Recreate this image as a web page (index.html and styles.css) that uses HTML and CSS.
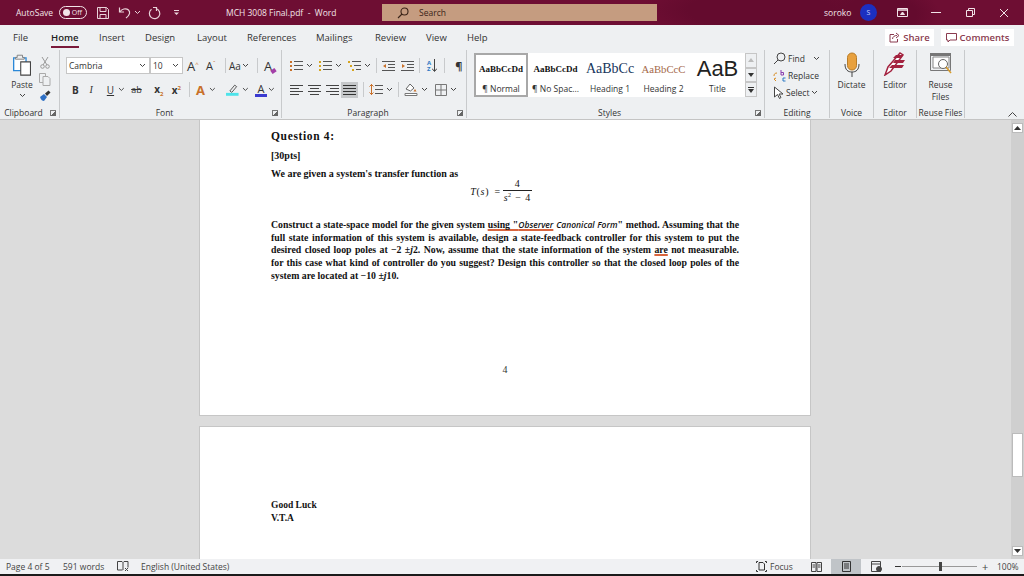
FILE: index.html
```html
<!DOCTYPE html>
<html lang="en">

<head>
    <meta charset="UTF-8">
    <title>MCH 3008 Final.pdf - Word</title>
    <link rel="stylesheet" href="styles.css">
</head>

<body>
    <div class="app">
        <!-- title bar -->
        <header class="titlebar">
            <span class="autosave">AutoSave</span>
            <span class="toggle"><i class="knob"></i>Off</span>
            <svg class="qat-save" width="14" height="14" viewBox="0 0 14 14" fill="none" stroke="#e9d3da"><path d="M1.5 1.5h9l2 2v9h-11z"/><path d="M4 1.5v4h6v-4M4 12.500v-4h6v4"/></svg>
            <svg class="qat-undo" width="13" height="13" viewBox="0 0 13 13" fill="none" stroke="#e9d3da" stroke-width="1.2"><path d="M1.5 1.5V6H6"/><path d="M1.800 6C3.500 2.800 8 1.800 10.500 4c2 2 1.500 5-2.500 8"/></svg>
            <svg class="qat-chev" width="7" height="5" viewBox="0 0 7 5" fill="none" stroke="#e9d3da"><path d="M1 1l2.500 2.500L6 1"/></svg>
            <svg class="qat-redo" width="14" height="14" viewBox="0 0 14 14" fill="none" stroke="#e9d3da" stroke-width="1.2"><path d="M5 1.5h3.500V5"/><path d="M8 2.500a5.200 5.200 0 1 1-4.500 .8"/></svg>
            <svg class="qat-more" width="7" height="7" viewBox="0 0 7 7" fill="#e9d3da"><path d="M1 1h5v1H1zM1 3.500h5L3.500 6z"/></svg>
            <span class="doc-title">MCH 3008 Final.pdf&nbsp; -&nbsp; Word</span>
            <div class="searchbox">
                <svg width="12" height="12" viewBox="0 0 12 12" fill="none" stroke="#3a2418" stroke-width="1.1"><circle cx="7.500" cy="4.500" r="3.500"/><path d="M5 7l-4 4"/></svg>
                <span>Search</span>
            </div>
            <span class="user">soroko</span>
            <span class="avatar">S</span>
            <svg class="win-ribbon" width="11" height="9" viewBox="0 0 11 9" fill="none" stroke="#f2e4e8"><path d="M.5 .5h10v8H.5z"/><path d="M.5 2h10" stroke-width="1.5"/><path d="M3.500 6.500L5.500 4l2 2.500z" fill="#f2e4e8"/></svg>
            <svg class="win-min" width="10" height="1" viewBox="0 0 10 1"><path d="M0 0h10v1H0z" fill="#f2e4e8"/></svg>
            <svg class="win-max" width="9" height="9" viewBox="0 0 9 9" fill="none" stroke="#f2e4e8"><path d="M.5 2.500h6v6h-6zM2.500 2.500v-2h6v6h-2"/></svg>
            <svg class="win-close" width="10" height="10" viewBox="0 0 10 10" stroke="#f2e4e8"><path d="M1 1l8 8M9 1l-8 8"/></svg>
        </header>

        <!-- tabs -->
        <nav class="tabs">
            <span class="tab t-file">File</span>
            <span class="tab t-home active">Home</span>
            <span class="tab t-insert">Insert</span>
            <span class="tab t-design">Design</span>
            <span class="tab t-layout">Layout</span>
            <span class="tab t-refs">References</span>
            <span class="tab t-mail">Mailings</span>
            <span class="tab t-review">Review</span>
            <span class="tab t-view">View</span>
            <span class="tab t-help">Help</span>
            <span class="tab-btn share">
                <svg width="11" height="11" viewBox="0 0 11 11" fill="none" stroke="#8a3b4f"><path d="M5 2.500H1V10h7.500V7"/><path d="M3.500 7c.3-2.500 2-3.500 4.500-3.500M7 1l3 2.500L7 6"/></svg>
                Share
            </span>
            <span class="tab-btn comments">
                <svg width="11" height="10" viewBox="0 0 11 10" fill="none" stroke="#8a3b4f"><path d="M.5 .5h10V7H4L2 9V7H.5z"/></svg>
                Comments
            </span>
        </nav>

        <!-- ribbon -->
        <section class="ribbon">
            <div class="group g-clip">
                <div class="group-body clip-body">
                    <div class="paste">
                        <svg width="23" height="23" viewBox="0 0 24 26" fill="none"><path d="M2 5.500h14V20H2z" stroke="#2b88d8" stroke-width="1.5" fill="#fff"/><path d="M6 5V2.500h6V5h2v2H4V5z" stroke="#777" fill="#eee"/><path d="M10 10h11v15H10z" fill="#fff" stroke="#444" stroke-width="1.2"/></svg>
                        <span>Paste</span>
                        <svg class="chev" width="7" height="5" viewBox="0 0 7 5"><path d="M1 1l2.500 2.500L6 1" fill="none" stroke="#444"/></svg>
                    </div>
                    <div class="clip-tools">
                        <svg width="10" height="13" viewBox="0 0 10 13" fill="none" stroke="#999"><path d="M2 1l5 8M8 1L3 9"/><circle cx="2.500" cy="10.500" r="1.800"/><circle cx="7.500" cy="10.500" r="1.800"/></svg>
                        <svg width="12" height="13" viewBox="0 0 12 13" fill="none" stroke="#aaa"><path d="M.5 .5h6v9h-6z"/><path d="M4 3.500h5l2 2v7H4z" fill="#eef0f2"/></svg>
                        <svg width="12" height="12" viewBox="0 0 12 12"><path d="M1 7l4-3 3 3-3 4C3.500 11 2 10 1 7z" fill="#2e6fc4"/><path d="M6 3.500L9.500 .5l2 2L8 6z" fill="#333"/></svg>
                    </div>
                </div>
                <div class="group-label has-launcher">Clipboard<i class="launcher"></i></div>
            </div>

            <div class="group g-font">
                <div class="group-body tool-rows">
                    <div class="tool-row font-row1">
                        <span class="combo c-face">Cambria<svg width="7" height="5" viewBox="0 0 7 5"><path d="M1 1l2.500 2.500L6 1" fill="none" stroke="#444"/></svg></span>
                        <span class="combo c-size">10<svg width="7" height="5" viewBox="0 0 7 5"><path d="M1 1l2.500 2.500L6 1" fill="none" stroke="#444"/></svg></span>
                        <span class="glyph a-big">A<sup>^</sup></span>
                        <span class="glyph a-small">A<sup>ˇ</sup></span>
                        <i class="sep"></i>
                        <span class="glyph aa">Aa<svg width="7" height="5" viewBox="0 0 7 5"><path d="M1 1l2.500 2.500L6 1" fill="none" stroke="#444"/></svg></span>
                        <i class="sep"></i>
                        <span class="glyph clear">A<i class="eraser"></i></span>
                    </div>
                    <div class="tool-row font-row2">
                        <b class="glyph w-b">B</b>
                        <i class="glyph w-i">I</i>
                        <u class="glyph w-u">U</u>
                        <svg class="chev" width="7" height="5" viewBox="0 0 7 5"><path d="M1 1l2.500 2.500L6 1" fill="none" stroke="#444"/></svg>
                        <s class="glyph w-s">ab</s>
                        <b class="glyph w-x">x<sub>2</sub></b>
                        <b class="glyph w-x2">x<sup>2</sup></b>
                        <i class="sep"></i>
                        <b class="glyph fx">A</b>
                        <svg class="chev" width="7" height="5" viewBox="0 0 7 5"><path d="M1 1l2.500 2.500L6 1" fill="none" stroke="#444"/></svg>
                        <svg class="hl" width="13" height="13" viewBox="0 0 13 13"><path d="M4 8l5-6 2 1.500-5 6z" fill="none" stroke="#555"/><path d="M0 10h13v3H0z" fill="#4ee3ea"/></svg>
                        <svg class="chev" width="7" height="5" viewBox="0 0 7 5"><path d="M1 1l2.500 2.500L6 1" fill="none" stroke="#444"/></svg>
                        <span class="glyph color">A</span>
                        <svg class="chev" width="7" height="5" viewBox="0 0 7 5"><path d="M1 1l2.500 2.500L6 1" fill="none" stroke="#444"/></svg>
                    </div>
                </div>
                <div class="group-label has-launcher">Font<i class="launcher"></i></div>
            </div>

            <div class="group g-para">
                <div class="group-body tool-rows">
                    <div class="tool-row para-row1">
                        <svg width="13" height="11" viewBox="0 0 13 11"><path d="M0 1h2v2H0zM0 5h2v2H0zM0 9h2v2H0z" fill="#c8702a"/><path d="M4 1.500h9M4 5.500h9M4 9.500h9" stroke="#555"/></svg>
                        <svg class="chev" width="7" height="5" viewBox="0 0 7 5"><path d="M1 1l2.500 2.500L6 1" fill="none" stroke="#444"/></svg>
                        <svg class="m-num" width="13" height="11" viewBox="0 0 13 11"><path d="M0 1h2v2H0zM0 5h2v2H0zM0 9h2v2H0z" fill="#d6a520"/><path d="M4 1.500h9M4 5.500h9M4 9.500h9" stroke="#555"/></svg>
                        <svg class="chev" width="7" height="5" viewBox="0 0 7 5"><path d="M1 1l2.500 2.500L6 1" fill="none" stroke="#444"/></svg>
                        <svg class="m-multi" width="13" height="11" viewBox="0 0 13 11"><path d="M0 1h2v2H0zM2 5h2v2H2zM4 9h2v2H4z" fill="#d6a520"/><path d="M4 1.500h9M6 5.500h7M8 9.500h5" stroke="#555"/></svg>
                        <svg class="chev" width="7" height="5" viewBox="0 0 7 5"><path d="M1 1l2.500 2.500L6 1" fill="none" stroke="#444"/></svg>
                        <i class="sep"></i>
                        <svg width="13" height="10" viewBox="0 0 13 10"><path d="M0 .5h13M6 3.500h7M6 6.500h7M0 9.500h13" stroke="#555"/><path d="M4 3v4L1 5z" fill="#c8702a"/></svg>
                        <svg class="m-ind" width="13" height="10" viewBox="0 0 13 10"><path d="M0 .5h13M6 3.500h7M6 6.500h7M0 9.500h13" stroke="#555"/><path d="M1 3v4l3-2z" fill="#c8702a"/></svg>
                        <i class="sep"></i>
                        <span class="sort"><b>A<br>Z</b><svg width="5" height="13" viewBox="0 0 5 13"><path d="M2.500 0v12M0 9.500l2.500 3 2.500-3" fill="none" stroke="#444"/></svg></span>
                        <i class="sep"></i>
                        <b class="pilcrow">¶</b>
                    </div>
                    <div class="tool-row para-row2">
                        <svg width="13" height="10" viewBox="0 0 13 10"><path d="M0 .5h13M0 3.500h9M0 6.500h13M0 9.500h9" stroke="#444"/></svg>
                        <svg class="m-al" width="13" height="10" viewBox="0 0 13 10"><path d="M0 .5h13M2 3.500h9M0 6.500h13M2 9.500h9" stroke="#444"/></svg>
                        <svg class="m-al" width="13" height="10" viewBox="0 0 13 10"><path d="M0 .5h13M4 3.500h9M0 6.500h13M4 9.500h9" stroke="#444"/></svg>
                        <span class="justify"><svg width="13" height="10" viewBox="0 0 13 10"><path d="M0 .5h13M0 3.500h13M0 6.500h13M0 9.500h13" stroke="#333"/></svg></span>
                        <i class="sep"></i>
                        <svg width="14" height="11" viewBox="0 0 14 11"><path d="M2.500 0v11M.5 2.500l2-2 2 2M.5 8.500l2 2 2-2" fill="none" stroke="#c8702a"/><path d="M6 1.500h8M6 5.500h8M6 9.500h8" stroke="#555"/></svg>
                        <svg class="chev" width="7" height="5" viewBox="0 0 7 5"><path d="M1 1l2.500 2.500L6 1" fill="none" stroke="#444"/></svg>
                        <i class="sep"></i>
                        <svg width="14" height="13" viewBox="0 0 14 13"><path d="M2 6l4-5 4 4-3.500 3z" fill="#fff" stroke="#666"/><path d="M11 6l1.500 2.500h-3z" fill="#c8702a"/><path d="M1 10.500h12v2H1z" fill="#fff" stroke="#777"/></svg>
                        <svg class="chev" width="7" height="5" viewBox="0 0 7 5"><path d="M1 1l2.500 2.500L6 1" fill="none" stroke="#444"/></svg>
                        <svg class="m-bd" width="12" height="12" viewBox="0 0 12 12" fill="none" stroke="#777"><path d="M.5 .5h11v11H.5zM6 .5v11M.5 6h11"/></svg>
                        <svg class="chev" width="7" height="5" viewBox="0 0 7 5"><path d="M1 1l2.500 2.500L6 1" fill="none" stroke="#444"/></svg>
                    </div>
                </div>
                <div class="group-label has-launcher">Paragraph<i class="launcher"></i></div>
            </div>

            <div class="group g-styles">
                <div class="group-body styles-body">
                    <div class="gallery">
                        <div class="style-item s-normal selected"><span class="preview p-serif">AaBbCcDd</span><span class="style-name">¶ Normal</span></div>
                        <div class="style-item s-nospace"><span class="preview p-serif">AaBbCcDd</span><span class="style-name">¶ No Spac...</span></div>
                        <div class="style-item s-h1"><span class="preview p-h1">AaBbCc</span><span class="style-name">Heading 1</span></div>
                        <div class="style-item s-h2"><span class="preview p-h2">AaBbCcC</span><span class="style-name">Heading 2</span></div>
                        <div class="style-item s-title"><span class="preview p-title">AaB</span><span class="style-name">Title</span></div>
                        <div class="gallery-scroll">
                            <span><svg width="6" height="4" viewBox="0 0 6 4"><path d="M0 4l3-4 3 4z" fill="#bbb"/></svg></span>
                            <span><svg width="6" height="4" viewBox="0 0 6 4"><path d="M0 0l3 4 3-4z" fill="#333"/></svg></span>
                            <span><svg width="6" height="6" viewBox="0 0 6 6"><path d="M0 0h6v1H0zM0 2l3 4 3-4z" fill="#333"/></svg></span>
                        </div>
                    </div>
                </div>
                <div class="group-label has-launcher">Styles<i class="launcher"></i></div>
            </div>

            <div class="group g-edit">
                <div class="group-body edit-body">
                    <div class="edit-row"><svg width="13" height="13" viewBox="0 0 13 13" fill="none" stroke="#444"><circle cx="8" cy="5" r="4"/><path d="M5 8l-4 4"/></svg>Find<svg class="chev-find" width="7" height="5" viewBox="0 0 7 5"><path d="M1 1l2.500 2.500L6 1" fill="none" stroke="#444"/></svg></div>
                    <div class="edit-row"><svg width="13" height="13" viewBox="0 0 13 13" fill="none"><path d="M1 7c0-2 1-3 3-3M3 12L1 10l2-1" stroke="#d88a1e"/><path d="M8 1v5h2.500V3.500H8" stroke="#8a3fb0"/><path d="M12.500 9H10v3h2.500" stroke="#2b78c4"/></svg>Replace</div>
                    <div class="edit-row"><svg width="11" height="13" viewBox="0 0 11 13" fill="#fff" stroke="#444"><path d="M1.500 1v10l3-2.500 2 4 1.500-1-2-3.500H10z"/></svg>Select<svg width="7" height="5" viewBox="0 0 7 5"><path d="M1 1l2.500 2.500L6 1" fill="none" stroke="#444"/></svg></div>
                </div>
                <div class="group-label">Editing</div>
            </div>

            <div class="group g-voice">
                <div class="group-body big-btn">
                    <svg width="16" height="26" viewBox="0 0 16 26" fill="none"><rect x="3.500" y="1" width="9" height="17" rx="4.500" fill="#e8a13f" stroke="#b87c28"/><path d="M1 12c0 6 3 8 7 8s7-2 7-8" stroke="#444"/><path d="M8 20v5" stroke="#444"/></svg>
                    <span>Dictate</span>
                </div>
                <div class="group-label">Voice</div>
            </div>

            <div class="group g-editor">
                <div class="group-body big-btn">
                    <svg width="24" height="24" viewBox="0 0 24 24"><path d="M2 23l3-8L17 1l3 2L8 19z" fill="#fff" stroke="#a3223f" stroke-width="1.5"/><path d="M12 8h10l-2 3H10zM9 13h12l-2 3H6z" fill="#a3223f"/><path d="M13 3h7l-2 3h-8z" fill="#a3223f"/></svg>
                    <span>Editor</span>
                </div>
                <div class="group-label">Editor</div>
            </div>

            <div class="group g-reuse">
                <div class="group-body big-btn">
                    <svg width="24" height="24" viewBox="0 0 24 24" fill="none"><path d="M1 1h21v3H1z" fill="#777"/><path d="M1.500 1.500h20v17h-20z" stroke="#777"/><path d="M4 5h16v11H4z" fill="#fff" stroke="#888"/><circle cx="14" cy="12" r="4.500" fill="#fff" stroke="#666"/><path d="M17 15l5 6" stroke="#d89a2a" stroke-width="1.5"/></svg>
                    <span>Reuse<br>Files</span>
                </div>
                <div class="group-label">Reuse Files</div>
            </div>

            <div class="collapse"><svg width="9" height="5" viewBox="0 0 9 5"><path d="M.5 4.500l4-4 4 4" fill="none" stroke="#444"/></svg></div>
        </section>

        <!-- document -->
        <main class="workspace">
            <div class="doc-area">
                <article class="page page-four">
                    <h2 class="question">Question 4:</h2>
                    <p class="points">[30pts]</p>
                    <p class="given">We are given a system's transfer function as</p>
                    <div class="formula">
                        <span class="lhs"><i>T</i>(<i>s</i>) =</span>
                        <span class="frac"><span class="num">4</span><span class="den"><i>s</i><sup>2</sup> − 4</span></span>
                    </div>
                    <p class="body-text">
                        <span class="line">Construct a state-space model for the given system <span class="squiggle">using "<em>Observer</em></span> <em>Canonical Form</em>" method. Assuming that the</span>
                        <span class="line">full state information of this system is available, design a state-feedback controller for this system to put the</span>
                        <span class="line">desired closed loop poles at −2 ±<i>j</i>2. Now, assume that the state information of the system <span class="squiggle">are</span> not measurable.</span>
                        <span class="line">for this case what kind of controller do you suggest? Design this controller so that the closed loop poles of the</span>
                        <span class="line last">system are located at −10 ±<i>j</i>10.</span>
                    </p>
                    <div class="page-number">4</div>
                </article>
                <article class="page page-five">
                    <p class="closing">Good Luck<br>V.T.A</p>
                </article>
            </div>
            <div class="scrollbar">
                <span class="sb-btn"><svg width="7" height="4" viewBox="0 0 7 4"><path d="M0 4l3.500-4L7 4z" fill="#333"/></svg></span>
                <span class="sb-thumb"></span>
                <span class="sb-btn"><svg width="7" height="4" viewBox="0 0 7 4"><path d="M0 0l3.500 4L7 0z" fill="#333"/></svg></span>
            </div>
        </main>

        <!-- status bar -->
        <footer class="statusbar">
            <span class="st-page">Page 4 of 5</span>
            <span class="st-words">591 words</span>
            <svg class="st-proof" width="12" height="11" viewBox="0 0 12 11" fill="none" stroke="#444"><path d="M.5 .5H5l1 1 1-1h4v6M6 1.500V9M.5 .5V9h5"/><path d="M8 7l3 3M11 7l-3 3"/></svg>
            <span class="st-lang">English (United States)</span>
            <svg class="st-focus" width="11" height="11" viewBox="0 0 11 11" fill="none" stroke="#333"><path d="M3 1.500h4L8.500 3v6H3z"/><path d="M.5 2V.5H2M9 .5h1.500V2M.5 9v1.500H2M9 10.500h1.500V9"/></svg>
            <span class="st-focus-label">Focus</span>
            <svg class="st-read" width="11" height="10" viewBox="0 0 11 10" fill="none" stroke="#444"><path d="M.5 .5H5v9H.5zM6 .5h4.500v9H6zM1.500 3H4M1.500 5H4M7 3h2.500M7 5h2.500"/></svg>
            <span class="st-print"><svg width="9" height="11" viewBox="0 0 9 11" fill="none" stroke="#333"><path d="M.5 .5h8v10h-8zM2 3h5M2 5h5M2 7h5"/></svg></span>
            <svg class="st-web" width="11" height="11" viewBox="0 0 11 11" fill="none" stroke="#444"><path d="M.5 .5h9v10H.5zM.5 3h9"/><circle cx="8" cy="8" r="2.500" fill="#444"/></svg>
            <span class="st-minus"></span>
            <span class="slider"><i class="slider-thumb"></i></span>
            <span class="st-plus">+</span>
            <span class="st-zoom">100%</span>
        </footer>
    </div>
</body>

</html>
```

FILE: styles.css
```css
html, body {
    margin: 0;
    padding: 0;
}

body {
    width: 1024px;
    height: 576px;
    overflow: hidden;
    font-family: "Open Sans", "Noto Sans", sans-serif;
    font-size: 8.5px;
    color: #333;
}

.app {
    display: flex;
    flex-direction: column;
    height: 576px;
}

/* title bar */
.titlebar {
    display: flex;
    align-items: center;
    flex: none;
    height: 25px;
    padding-left: 16px;
    color: #f2e4e8;
    background-color: #6e0e33;
    background-image: radial-gradient(ellipse 120px 30px at 760px 10px, #640b2e 60%, transparent 100%), radial-gradient(ellipse 60px 30px at 880px 14px, #640b2e 60%, transparent 100%);
}

.autosave { width: 43px; }

.toggle {
    display: flex;
    align-items: center;
    justify-content: space-between;
    box-sizing: border-box;
    width: 28px;
    height: 13px;
    padding: 0 4px 0 3px;
    border: 1px solid #f2e4e8;
    border-radius: 7px;
    font-size: 7px;
}

.knob {
    width: 7px;
    height: 7px;
    border-radius: 50%;
    background: #f2e4e8;
}

.qat-save { margin-left: 9px; }
.qat-undo { margin-left: 8px; }
.qat-chev { margin-left: 3px; }
.qat-redo { margin-left: 7px; }
.qat-more { margin-left: 11px; }
.doc-title { margin-left: 46px; width: 156px; }

.searchbox {
    display: flex;
    align-items: center;
    gap: 10px;
    box-sizing: border-box;
    width: 275px;
    height: 17px;
    padding-left: 15px;
    color: #3a2418;
    background: #c59c80;
}

.user { margin-left: 167px; width: 36px; }

.avatar {
    display: flex;
    align-items: center;
    justify-content: center;
    width: 17px;
    height: 17px;
    border-radius: 50%;
    font-size: 7px;
    color: #c9d0ff;
    background: #1c2fc0;
}

.win-ribbon { margin-left: 20px; }
.win-min { margin-left: 23px; }
.win-max { margin-left: 25px; }
.win-close { margin-left: 24px; }

/* tabs */
.tabs {
    display: flex;
    align-items: center;
    flex: none;
    height: 25px;
    background: #eef0f2;
    font-size: 9.5px;
}

.tab { position: relative; }
.t-file { margin-left: 13px; width: 38px; }
.t-home { width: 48px; font-weight: 600; color: #222; }
.t-insert { width: 46px; }
.t-design { width: 52px; }
.t-layout { width: 50px; }
.t-refs { width: 69px; }
.t-mail { width: 59px; }
.t-review { width: 51px; }
.t-view { width: 41px; }
.t-help { width: 418px; }

.t-home::after {
    content: "";
    position: absolute;
    left: 0;
    right: 20px;
    bottom: -4px;
    height: 2px;
    background: #7a1a3b;
}

.tab-btn {
    display: flex;
    align-items: center;
    justify-content: center;
    gap: 3px;
    height: 17px;
    font-weight: 600;
    font-size: 9.5px;
    color: #8a3b4f;
    background: #fff;
}

.share { width: 49px; margin-right: 7px; }
.comments { width: 73px; }

/* ribbon */
.ribbon {
    display: flex;
    flex: none;
    box-sizing: border-box;
    height: 70px;
    background: #eef0f2;
    border-bottom: 1px solid #c4c4c4;
}

.group {
    display: flex;
    flex-direction: column;
    flex: none;
    box-sizing: border-box;
    height: 68px;
    border-right: 1px solid #c8cacc;
}

.group-body {
    flex: 1;
    min-height: 0;
}

.group-label {
    position: relative;
    height: 10px;
    line-height: 10px;
    font-size: 8.5px;
    text-align: center;
}

.group-label.has-launcher { padding-right: 12px; }

.launcher {
    position: absolute;
    right: 3px;
    top: 2px;
    box-sizing: border-box;
    width: 6px;
    height: 6px;
    border-left: 1px solid #777;
    border-top: 1px solid #777;
    background: linear-gradient(135deg, transparent 45%, #666 45%, #666 100%);
}

.g-clip { width: 60px; }
.g-font { width: 222px; }
.g-para { width: 185px; }
.g-styles { width: 298px; }
.g-edit { width: 65px; }
.g-voice { width: 44px; }
.g-editor { width: 43px; }
.g-reuse { width: 48px; }

.clip-body {
    display: flex;
    padding: 3px 0 0 12px;
}

.paste {
    display: flex;
    flex-direction: column;
    align-items: center;
    width: 24px;
    margin-left: -2px;
}

.paste span { margin-top: 3px; }
.paste .chev { margin-top: 3px; }

.clip-tools {
    display: flex;
    flex-direction: column;
    align-items: center;
    gap: 4px;
    margin: 3px 0 0 5px;
}

.tool-rows {
    display: flex;
    flex-direction: column;
    gap: 7px;
    padding-top: 7px;
}

.tool-row {
    display: flex;
    align-items: center;
    height: 17px;
}

.sep {
    width: 1px;
    height: 15px;
    background: #c8cacc;
}

.combo {
    display: flex;
    align-items: center;
    justify-content: space-between;
    box-sizing: border-box;
    height: 17px;
    padding: 0 3px 0 2px;
    border: 1px solid #c6c6c6;
    background: #fff;
    font-size: 8.5px;
}

.font-row1 { padding-left: 6px; }
.c-face { width: 84px; }
.c-size { width: 33px; }

.glyph { font-style: normal; }
.glyph sup { font-size: 6px; color: #c8702a; }
.a-big { margin-left: 4px; width: 19px; font-size: 13px; }
.a-small { width: 19px; font-size: 11px; }
.aa { display: flex; align-items: center; gap: 1px; margin: 0 8px 0 3px; font-size: 10px; }
.clear { position: relative; margin-left: 6px; font-size: 13px; }

.eraser {
    position: absolute;
    left: 7px;
    bottom: 2px;
    width: 5px;
    height: 4px;
    background: #a33fa8;
    transform: rotate(-35deg);
}

.font-row2 { padding-left: 12px; font-size: 10px; }
.w-b { width: 18px; }
.w-i { width: 18px; font-family: "Liberation Serif", serif; font-style: italic; }
.w-u { width: 12px; }
.font-row2 .chev { margin-right: 6px; }
.w-s { width: 24px; font-size: 9px; }
.w-x { width: 18px; }
.w-x2 { width: 18px; }
.glyph sub { font-size: 6px; color: #c8702a; }
.fx { margin-left: 6px; width: 13px; font-size: 13px; color: #c8702a; }
.hl { margin-left: 5px; margin-right: 3px; }
.color {
    width: 13px;
    margin-right: 1px;
    font-size: 11px;
    text-align: center;
    line-height: 11px;
    border-bottom: 3px solid #3b3bd0;
}

.para-row1, .para-row2 { padding-left: 8px; }
.para-row1 .chev, .para-row2 .chev { margin-left: 3px; }
.m-num, .m-multi { margin-left: 6px; }
.para-row1 .sep { margin: 0 5px; }
.m-ind { margin-left: 6px; }
.sort { display: flex; align-items: center; gap: 1px; margin: 0 2px; }
.sort b { font-size: 6px; line-height: 6px; color: #2b78c4; }
.pilcrow { margin-left: 5px; font-size: 11px; }
.m-al { margin-left: 5px; }

.justify {
    display: flex;
    align-items: center;
    justify-content: center;
    width: 17px;
    height: 16px;
    margin-left: 2px;
    background: #c6c8ca;
}

.para-row2 .sep { margin: 0 5px; }
.m-bd { margin-left: 7px; }

.styles-body { padding: 3px 7px 0; }

.gallery {
    display: flex;
    box-sizing: border-box;
    width: 283px;
    height: 44px;
    background: #fff;
}

.style-item {
    display: flex;
    flex-direction: column;
    align-items: center;
    box-sizing: border-box;
    padding-top: 2px;
}

.style-item.selected {
    border: 2px solid #a8a8a8;
    padding-top: 0;
}

.s-normal { width: 54px; }
.s-nospace { width: 55px; }
.s-h1 { width: 54px; }
.s-h2 { width: 53px; }
.s-title { width: 55px; }

.preview {
    flex: none;
    height: 28px;
    line-height: 28px;
    white-space: nowrap;
    font-family: "Liberation Serif", serif;
    color: #111;
}

.p-serif { font-size: 9px; font-weight: bold; }
.p-h1 { font-size: 14px; color: #17365d; }
.p-h2 { font-size: 10.7px; color: #a5694a; }
.p-title { font-family: "Liberation Sans", sans-serif; font-size: 22px; color: #222; }
.style-name { font-size: 8.5px; white-space: nowrap; }

.gallery-scroll {
    display: flex;
    flex-direction: column;
    flex: none;
    width: 12px;
}

.gallery-scroll span {
    display: flex;
    align-items: center;
    justify-content: center;
    flex: 1;
    border: 1px solid #c6c6c6;
    background: #eef0f2;
}

.edit-body {
    display: flex;
    flex-direction: column;
    gap: 4px;
    padding: 2px 0 0 8px;
}

.edit-row {
    display: flex;
    align-items: center;
    gap: 2px;
    height: 13px;
    white-space: nowrap;
}

.chev-find { margin-left: 6px; }

.big-btn {
    display: flex;
    flex-direction: column;
    align-items: center;
    padding-top: 2px;
    text-align: center;
    line-height: 12px;
}

.big-btn span { margin-top: 1px; }
.g-editor .big-btn span { margin-top: 3px; }
.g-reuse .big-btn span { margin-top: 3px; }

.collapse {
    display: flex;
    align-items: flex-end;
    justify-content: flex-end;
    flex: 1;
    box-sizing: border-box;
    height: 67px;
    padding-right: 7px;
}

/* document */
.workspace {
    display: flex;
    flex: none;
    height: 439px;
    overflow: hidden;
    background: #dcdcdc;
}

.doc-area {
    flex: 1;
    overflow: hidden;
    padding-right: 1px;
}

.page {
    box-sizing: border-box;
    width: 612px;
    margin: 0 auto 10px;
    padding: 0 71px;
    border: 1px solid #c6c6c6;
    background: #fff;
    font-family: "Liberation Serif", serif;
    font-size: 10px;
    font-weight: bold;
    color: #111;
}

.page-four {
    height: 297px;
    margin-top: -1px;
    border-top: 0;
    padding-top: 10px;
}

.page-five {
    height: 140px;
    padding-top: 72px;
    font-size: 9.5px;
}

.question {
    margin: 0;
    font-size: 11.5px;
    letter-spacing: 0.65px;
    line-height: 14px;
}

.points {
    margin: 6px 0 0;
    line-height: 13px;
}

.given {
    margin: 5px 0 0;
    line-height: 13px;
}

.formula {
    display: flex;
    align-items: center;
    justify-content: center;
    gap: 2px;
    height: 26px;
    margin: -2px 0 0;
    padding-right: 8px;
    font-weight: normal;
}

.lhs {
    letter-spacing: 0.7px;
    word-spacing: 2px;
}

.frac {
    display: flex;
    flex-direction: column;
    align-items: center;
}

.num {
    align-self: stretch;
    text-align: center;
    border-bottom: 1px solid #222;
    line-height: 12px;
}

.den {
    line-height: 13px;
    padding: 0 1px;
    letter-spacing: 0.4px;
    word-spacing: 1px;
}

.den sup { font-size: 6px; line-height: 0; }

.body-text {
    margin: 15px 0 0;
    font-size: 9.8px;
    line-height: 12.7px;
}

.line {
    display: block;
    text-align: justify;
    text-align-last: justify;
    white-space: nowrap;
}

.line.last { text-align-last: left; }

.line em {
    font-family: "Open Sans", sans-serif;
    font-size: 8.5px;
    font-weight: 600;
}

.squiggle {
    text-decoration: underline;
    text-decoration-color: #d9663f;
    text-decoration-thickness: 2px;
    text-decoration-skip-ink: none;
}

.page-number {
    margin-top: 81px;
    text-align: center;
    font-weight: normal;
    color: #333;
}

.closing {
    margin: 0;
    line-height: 13px;
}

/* scrollbar */
.scrollbar {
    display: flex;
    flex-direction: column;
    flex: none;
    align-items: center;
    box-sizing: border-box;
    width: 13px;
    padding: 3px 0 2px;
    background: #cfcfcf;
}

.sb-btn {
    display: flex;
    align-items: center;
    justify-content: center;
    flex: none;
    box-sizing: border-box;
    width: 11px;
    height: 10px;
    border: 1px solid #bbb;
    background: #fff;
}

.sb-thumb {
    flex: none;
    box-sizing: border-box;
    width: 11px;
    height: 44px;
    margin: 300px 0 69px;
    border: 1px solid #bbb;
    background: #fff;
}

/* status bar */
.statusbar {
    display: flex;
    align-items: center;
    flex: none;
    box-sizing: border-box;
    height: 17px;
    padding: 0 0 0 6px;
    border-bottom: 2px solid #1a1a1a;
    font-size: 8.5px;
    color: #444;
    background: #f0f1f3;
}

.st-page { width: 57px; }
.st-words { width: 54px; }
.st-lang { margin-left: 12px; width: 615px; }
.st-focus-label { margin-left: 3px; width: 41px; }
.st-print {
    display: flex;
    align-items: center;
    justify-content: center;
    width: 30px;
    height: 15px;
    margin: 0 10px 0 9px;
    background: #c0c4c8;
}

.st-minus {
    width: 6px;
    height: 1px;
    margin: 0 1px 0 13px;
    background: #333;
}

.slider {
    position: relative;
    width: 75px;
    height: 1px;
    background: #999;
}

.slider-thumb {
    position: absolute;
    left: 37px;
    top: -4px;
    width: 3px;
    height: 9px;
    background: #444;
}

.st-plus { margin-left: 5px; width: 15px; font-size: 11px; }
.st-zoom { width: 22px; }
```
